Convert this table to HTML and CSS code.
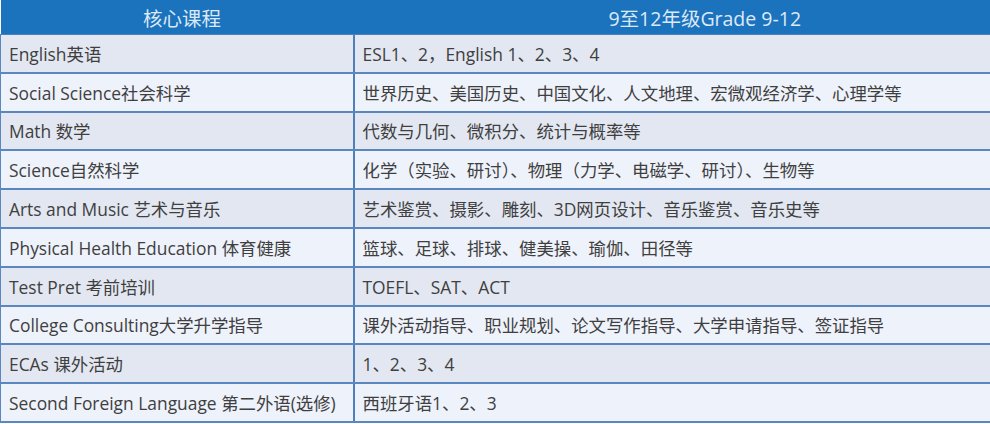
FILE: index.html
```html
<!DOCTYPE html>
<html lang="zh">
<head>
<meta charset="utf-8">
<link rel="stylesheet" href="styles.css">
</head>
<body>
<table class="course-table">
  <thead>
    <tr><th class="col-a">核心课程</th><th class="col-b">9至12年级Grade 9-12</th></tr>
  </thead>
  <tbody>
    <tr class="odd"><td>English英语</td><td>ESL1、2，English 1、2、3、4</td></tr>
    <tr class="even"><td>Social Science社会科学</td><td>世界历史、美国历史、中国文化、人文地理、宏微观经济学、心理学等</td></tr>
    <tr class="odd"><td>Math 数学</td><td>代数与几何、微积分、统计与概率等</td></tr>
    <tr class="even"><td>Science自然科学</td><td>化学（实验、研讨）、物理（力学、电磁学、研讨）、生物等</td></tr>
    <tr class="odd"><td>Arts and Music 艺术与音乐</td><td>艺术鉴赏、摄影、雕刻、3D网页设计、音乐鉴赏、音乐史等</td></tr>
    <tr class="even"><td>Physical Health Education 体育健康</td><td>篮球、足球、排球、健美操、瑜伽、田径等</td></tr>
    <tr class="odd"><td>Test Pret 考前培训</td><td>TOEFL、SAT、ACT</td></tr>
    <tr class="even"><td>College Consulting大学升学指导</td><td>课外活动指导、职业规划、论文写作指导、大学申请指导、签证指导</td></tr>
    <tr class="odd"><td>ECAs 课外活动</td><td>1、2、3、4</td></tr>
    <tr class="even"><td>Second Foreign Language 第二外语(选修)</td><td>西班牙语1、2、3</td></tr>
  </tbody>
</table>
</body>
</html>
```

FILE: styles.css
```css
html, body {
  margin: 0;
  padding: 0;
  background: #ffffff;
}
body {
  width: 990px;
  height: 424px;
  overflow: hidden;
  font-family: "Open Sans", "Noto Sans CJK SC", sans-serif;
}
.course-table {
  width: 990px;
  border-collapse: collapse;
  table-layout: fixed;
}
.course-table th {
  background: #1b72bd;
  color: #dce9f6;
  font-weight: normal;
  font-size: 19.5px;
  height: 34px;
  padding: 0;
  text-align: center;
  border-bottom: 1px solid #4b7fbe;
}
.course-table th.col-a {
  width: 343px;
  padding-left: 10px;
}
.course-table th.col-b {
  padding-left: 66px;
}
.course-table td {
  height: 36.8px;
  padding: 0 0 0 8px;
  font-size: 17.4px;
  color: #3f3f3f;
  border-bottom: 2px solid #5a87c0;
  white-space: nowrap;
}
.course-table td:first-child {
  border-left: 1px solid #5a87c0;
  border-right: 2px solid #4f7fbb;
}
.course-table tr.odd td { background: #e2e7f1; }
.course-table tr.even td { background: #eef2fb; }
```
